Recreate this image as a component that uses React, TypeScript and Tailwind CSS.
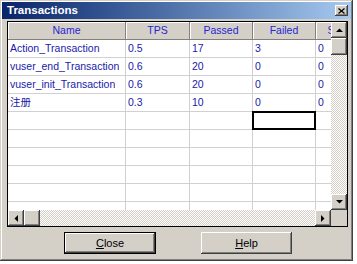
import React from "react";

const raised =
  "bg-[#d4d0c8] shadow-[inset_-1px_-1px_0_#404040,inset_1px_1px_0_#ffffff,inset_-2px_-2px_0_#808080,inset_2px_2px_0_#d4d0c8]";

const track =
  "bg-[repeating-conic-gradient(#d4d0c8_0_25%,#ffffff_0_50%)] bg-[length:2px_2px]";

const columns = [
  { label: "Name", w: "w-[118px]" },
  { label: "TPS", w: "w-[64px]" },
  { label: "Passed", w: "w-[63px]" },
  { label: "Failed", w: "w-[63px]" },
  { label: "Stopped", w: "w-[63px]" },
];

const rows: string[][] = [
  ["Action_Transaction", "0.5", "17", "3", "0"],
  ["vuser_end_Transaction", "0.6", "20", "0", "0"],
  ["vuser_init_Transaction", "0.6", "20", "0", "0"],
  ["注册", "0.3", "10", "0", "0"],
  ["", "", "", "", ""],
  ["", "", "", "", ""],
  ["", "", "", "", ""],
  ["", "", "", "", ""],
  ["", "", "", "", ""],
  ["", "", "", "", ""],
];

const Arrow = ({ dir }: { dir: "up" | "down" | "left" | "right" }) => {
  const pts = {
    up: "0,4 7,4 3.5,0.5",
    down: "0,0 7,0 3.5,3.5",
    left: "4,0 4,7 0.5,3.5",
    right: "0,0 0,7 3.5,3.5",
  }[dir];
  const vert = dir === "up" || dir === "down";
  return (
    <svg width={vert ? 7 : 4} height={vert ? 4 : 7} viewBox={vert ? "0 0 7 4" : "0 0 4 7"}>
      <polygon points={pts} fill="#000" />
    </svg>
  );
};

const Grid = () => (
  <div className="w-[323px] h-[188px] overflow-hidden bg-white text-[10.5px]">
    {/* header */}
    <div className="flex h-[18px] w-max">
      {columns.map((c) => (
        <div
          key={c.label}
          className={`${c.w} shrink-0 h-full flex items-center justify-center bg-[#d4d0c8] border-r border-b border-[#808080] shadow-[inset_1px_1px_0_#ffffff] text-[#2626d4]`}
        >
          {c.label}
        </div>
      ))}
    </div>
    {rows.map((r, i) => (
      <div key={i} className="flex h-[18px] w-max">
        {r.map((v, j) => (
          <div
            key={j}
            className={`${columns[j].w} relative shrink-0 h-full flex items-center pl-[2px] border-r border-b border-[#d0d0d0] text-[#1a1aa8] whitespace-nowrap`}
          >
            <span className="overflow-hidden">{v}</span>
            {i === 4 && j === 3 && (
              <div className="absolute -left-px -top-px w-[64px] h-[19px] border-2 border-black" />
            )}
          </div>
        ))}
      </div>
    ))}
  </div>
);

const App: React.FC = () => {
  return (
    <div
      className="w-[357px] h-[264px] bg-white text-[11px] leading-none"
      style={{ fontFamily: '"Liberation Sans", "Noto Sans CJK SC", Arial, sans-serif' }}
    >
      <div className="w-[353px] h-[261px] bg-[#d4d0c8] p-[2px] flex flex-col shadow-[inset_-1px_-1px_0_#404040,inset_1px_1px_0_#d4d0c8,inset_-2px_-2px_0_#808080,inset_2px_2px_0_#ffffff]">
        {/* title bar */}
        <div className="h-[17px] flex items-center justify-between pl-[5px] pr-[3px] bg-gradient-to-r from-[#0a246a] to-[#a6caf0]">
          <span className="text-white font-bold text-[11.5px]">Transactions</span>
          <div className={`${raised} w-[13px] h-[11px] flex items-center justify-center`}>
            <svg width="7" height="6" viewBox="0 0 7 6">
              <path d="M0.5 0.5 L6.5 5.5 M6.5 0.5 L0.5 5.5" stroke="#000" strokeWidth="1.3" />
            </svg>
          </div>
        </div>

        {/* grid frame */}
        <div className="ml-[5px] mt-[2px] w-[341px] h-[206px] border border-black bg-white flex flex-col">
          <div className="flex">
            <Grid />
            {/* vertical scrollbar */}
            <div className={`w-[16px] h-[188px] flex flex-col ${track}`}>
              <div className={`${raised} h-[16px] flex items-center justify-center`}>
                <Arrow dir="up" />
              </div>
              <div className={`${raised} h-[17px]`} />
              <div className="flex-1" />
              <div className={`${raised} h-[16px] flex items-center justify-center`}>
                <Arrow dir="down" />
              </div>
            </div>
          </div>
          <div className="flex h-[16px]">
            {/* horizontal scrollbar */}
            <div className={`w-[323px] h-full flex ${track}`}>
              <div className={`${raised} w-[16px] flex items-center justify-center`}>
                <Arrow dir="left" />
              </div>
              <div className={`${raised} w-[16px]`} />
              <div className="flex-1" />
              <div className={`${raised} w-[16px] flex items-center justify-center`}>
                <Arrow dir="right" />
              </div>
            </div>
            <div className="w-[16px] h-full bg-[#d4d0c8]" />
          </div>
        </div>

        {/* buttons */}
        <div className="flex mt-[5px] ml-[62px] gap-[45px] text-black">
          <button className="w-[92px] h-[22px] border border-black bg-[#d4d0c8] shadow-[inset_-1px_-1px_0_#404040,inset_1px_1px_0_#ffffff,inset_-2px_-2px_0_#808080] flex items-center justify-center">
            <span>
              <span className="underline">C</span>lose
            </span>
          </button>
          <button className={`${raised} w-[91px] h-[22px] flex items-center justify-center`}>
            <span>
              <span className="underline">H</span>elp
            </span>
          </button>
        </div>
      </div>
    </div>
  );
};

export default App;
